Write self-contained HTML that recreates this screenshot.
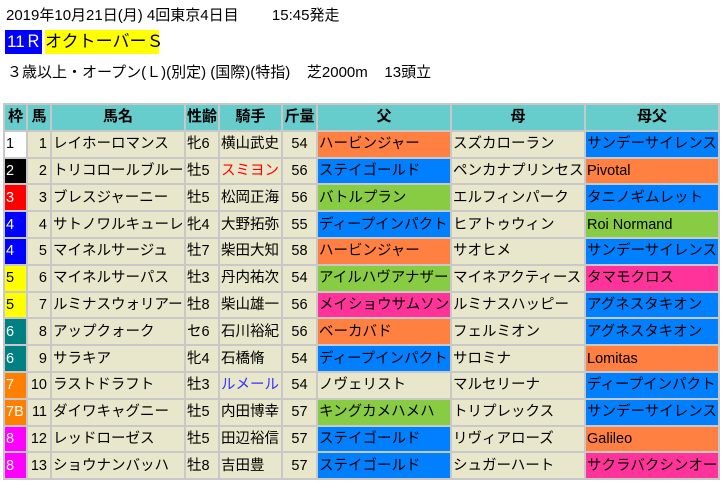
<!DOCTYPE html>
<html><head><meta charset="utf-8"><style>
body{margin:0;width:724px;height:481px;background:#fff;font-family:"Liberation Sans","Noto Sans CJK JP",sans-serif;color:#000;position:relative;overflow:hidden}
.t{position:absolute;font-size:15px;white-space:pre}
table{position:absolute;left:3px;top:103px;border-collapse:separate;border-spacing:2px;background:#c8c8c8;table-layout:fixed;width:717px}
td,th{height:24.8px;padding:0;box-sizing:border-box;font-size:14.5px;white-space:nowrap;overflow:hidden;background:#e8e6cb;line-height:24px;text-indent:1px}
th{background:#66cccc;font-weight:bold;text-align:center;font-size:15px;text-indent:0}
td.n{text-align:right;padding-right:3px}
td.c{text-align:center;text-indent:0}
.o{background:#ff8040}.b{background:#0080ff}.g{background:#88cc44}.p{background:#ff3399}
.w{color:#fff}
</style></head><body>
<div class="t" style="left:6px;top:4px">2019年10月21日(月) 4回東京4日目        15:45発走</div>
<div class="t" style="left:5px;top:30px;width:37px;height:24px;background:#0000ff;color:#fff;font-size:17px;line-height:24px;text-indent:2px">11Ｒ</div>
<div class="t" style="left:45px;top:30px;width:114px;height:24px;background:#ffff00;font-size:17px;line-height:24px">オクトーバーＳ</div>
<div class="t" style="left:7px;top:61px">３歳以上・オープン(Ｌ)(別定) (国際)(特指)    芝2000m    13頭立</div>
<table>
<colgroup><col style="width:21px"><col style="width:22px"><col style="width:132px"><col style="width:32px"><col style="width:61px"><col style="width:33px"><col style="width:132px"><col style="width:132px"><col style="width:132px"></colgroup>
<tr><th>枠</th><th>馬</th><th>馬名</th><th>性齢</th><th>騎手</th><th>斤量</th><th>父</th><th>母</th><th>母父</th></tr>
<tr><td style="background:#fff">1</td><td class="n">1</td><td>レイホーロマンス</td><td>牝6</td><td>横山武史</td><td class="c">54</td><td class="o">ハービンジャー</td><td>スズカローラン</td><td class="b">サンデーサイレンス</td></tr>
<tr><td style="background:#000" class="w">2</td><td class="n">2</td><td>トリコロールブルー</td><td>牡5</td><td style="color:#ff0000">スミヨン</td><td class="c">56</td><td class="b">ステイゴールド</td><td>ペンカナプリンセス</td><td class="o">Pivotal</td></tr>
<tr><td style="background:#ff0000" class="w">3</td><td class="n">3</td><td>ブレスジャーニー</td><td>牡5</td><td>松岡正海</td><td class="c">56</td><td class="g">バトルプラン</td><td>エルフィンパーク</td><td class="b">タニノギムレット</td></tr>
<tr><td style="background:#0000ff" class="w">4</td><td class="n">4</td><td>サトノワルキューレ</td><td>牝4</td><td>大野拓弥</td><td class="c">55</td><td class="b">ディープインパクト</td><td>ヒアトゥウィン</td><td class="g">Roi Normand</td></tr>
<tr><td style="background:#0000ff" class="w">4</td><td class="n">5</td><td>マイネルサージュ</td><td>牡7</td><td>柴田大知</td><td class="c">58</td><td class="o">ハービンジャー</td><td>サオヒメ</td><td class="b">サンデーサイレンス</td></tr>
<tr><td style="background:#ffff00">5</td><td class="n">6</td><td>マイネルサーパス</td><td>牡3</td><td>丹内祐次</td><td class="c">54</td><td class="g">アイルハヴアナザー</td><td>マイネアクティース</td><td class="p">タマモクロス</td></tr>
<tr><td style="background:#ffff00">5</td><td class="n">7</td><td>ルミナスウォリアー</td><td>牡8</td><td>柴山雄一</td><td class="c">56</td><td class="p">メイショウサムソン</td><td>ルミナスハッピー</td><td class="b">アグネスタキオン</td></tr>
<tr><td style="background:#008080" class="w">6</td><td class="n">8</td><td>アップクォーク</td><td>セ6</td><td>石川裕紀</td><td class="c">56</td><td class="o">ベーカバド</td><td>フェルミオン</td><td class="b">アグネスタキオン</td></tr>
<tr><td style="background:#008080" class="w">6</td><td class="n">9</td><td>サラキア</td><td>牝4</td><td>石橋脩</td><td class="c">54</td><td class="b">ディープインパクト</td><td>サロミナ</td><td class="o">Lomitas</td></tr>
<tr><td style="background:#ff8000" class="w">7</td><td class="n">10</td><td>ラストドラフト</td><td>牡3</td><td style="color:#3333ff">ルメール</td><td class="c">54</td><td>ノヴェリスト</td><td>マルセリーナ</td><td class="b">ディープインパクト</td></tr>
<tr><td style="background:#ff8000" class="w">7B</td><td class="n">11</td><td>ダイワキャグニー</td><td>牡5</td><td>内田博幸</td><td class="c">57</td><td class="g">キングカメハメハ</td><td>トリプレックス</td><td class="b">サンデーサイレンス</td></tr>
<tr><td style="background:#ff00ff" class="w">8</td><td class="n">12</td><td>レッドローゼス</td><td>牡5</td><td>田辺裕信</td><td class="c">57</td><td class="b">ステイゴールド</td><td>リヴィアローズ</td><td class="o">Galileo</td></tr>
<tr><td style="background:#ff00ff" class="w">8</td><td class="n">13</td><td>ショウナンバッハ</td><td>牡8</td><td>吉田豊</td><td class="c">57</td><td class="b">ステイゴールド</td><td>シュガーハート</td><td class="p">サクラバクシンオー</td></tr>
</table>
</body></html>
